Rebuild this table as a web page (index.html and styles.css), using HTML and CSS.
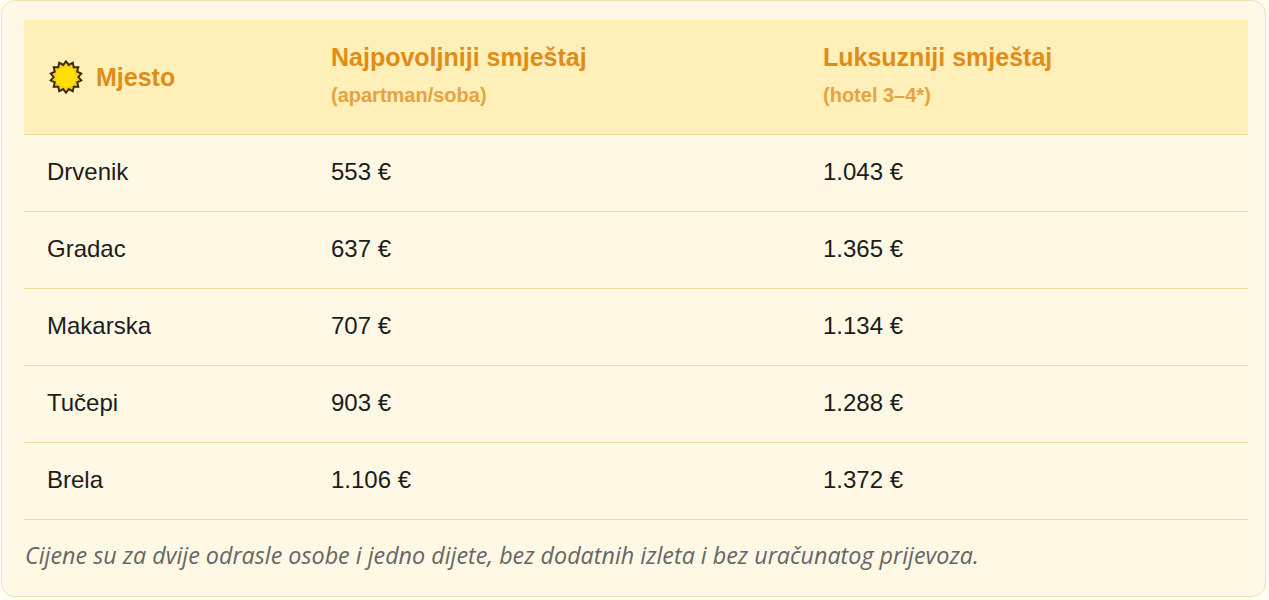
FILE: index.html
```html
<!DOCTYPE html>
<html lang="hr">
<head>
<meta charset="utf-8">
<title>Cijene smještaja</title>
<link rel="stylesheet" href="styles.css">
</head>
<body>
<div class="card">
  <table class="prices">
    <colgroup>
      <col class="c1"><col class="c2"><col class="c3">
    </colgroup>
    <thead>
      <tr>
        <th>
          <div class="place-head">
            <svg class="sun" width="36" height="36" viewBox="0 0 32 32" aria-hidden="true">
              <polygon points="16,2 18.45,5.28 22.07,3.39 22.86,7.4 26.95,7.27 25.91,11.23 29.65,12.89 27,16 29.65,19.11 25.91,20.77 26.95,24.73 22.86,24.6 22.07,28.61 18.45,26.72 16,30 13.55,26.72 9.93,28.61 9.14,24.6 5.05,24.73 6.09,20.77 2.35,19.11 5,16 2.35,12.89 6.09,11.23 5.05,7.27 9.14,7.4 9.93,3.39 13.55,5.28" fill="#f7cf12" stroke="#3a2a0c" stroke-width="1.7" stroke-linejoin="miter"/>
              <circle cx="16" cy="16" r="9" fill="#ffde0a"/>
            </svg>
            <span>Mjesto</span>
          </div>
        </th>
        <th>
          <div class="h-title">Najpovoljniji smještaj</div>
          <div class="h-sub">(apartman/soba)</div>
        </th>
        <th>
          <div class="h-title">Luksuzniji smještaj</div>
          <div class="h-sub">(hotel 3–4*)</div>
        </th>
      </tr>
    </thead>
    <tbody>
      <tr><td>Drvenik</td><td>553 €</td><td>1.043 €</td></tr>
      <tr><td>Gradac</td><td>637 €</td><td>1.365 €</td></tr>
      <tr><td>Makarska</td><td>707 €</td><td>1.134 €</td></tr>
      <tr><td>Tučepi</td><td>903 €</td><td>1.288 €</td></tr>
      <tr><td>Brela</td><td>1.106 €</td><td>1.372 €</td></tr>
    </tbody>
  </table>
  <p class="note">Cijene su za dvije odrasle osobe i jedno dijete, bez dodatnih izleta i bez uračunatog prijevoza.</p>
</div>
</body>
</html>
```
FILE: styles.css
```css
html, body {
  margin: 0;
  padding: 0;
}
body {
  background: #fffdf4;
  padding: 0 3px 3px 1px;
  font-family: "Liberation Sans", Arial, sans-serif;
}
.card {
  background: #fef8e4;
  border: 1px solid #f1e2ae;
  border-radius: 14px;
  padding: 19px 17px 0 22px;
  box-shadow: inset 0 0 6px rgba(255,255,255,0.6);
}
.prices {
  width: 1224px;
  border-collapse: collapse;
  table-layout: fixed;
}
.c1 { width: 284px; }
.c2 { width: 492px; }
.c3 { width: 448px; }
.prices thead th {
  background: #ffefb9;
  text-align: left;
  vertical-align: middle;
  padding: 22px 10px 27px 23px;
  border-bottom: 1px solid #efd89a;
  color: #e08d17;
  font-weight: bold;
}
.place-head {
  display: flex;
  align-items: center;
  gap: 12px;
  font-size: 25px;
  margin: 5px 0 0 1px;
}
.sun { display: block; flex: none; }
.h-title {
  font-size: 25px;
  line-height: 30px;
}
.h-sub {
  font-size: 20px;
  line-height: 24px;
  margin-top: 11px;
  color: #e6a340;
}
.prices tbody td {
  height: 77px;
  padding: 0 10px 3px 23px;
  box-sizing: border-box;
  font-size: 24px;
  color: #1c1c1c;
  border-bottom: 1px solid #f0dc9e;
  vertical-align: middle;
}
.note {
  margin: 0;
  padding: 20px 0 26px 1px;
  font-family: "Open Sans", "Noto Sans", sans-serif;
  font-style: italic;
  font-size: 23.3px;
  line-height: 30px;
  color: #666666;
}
```
